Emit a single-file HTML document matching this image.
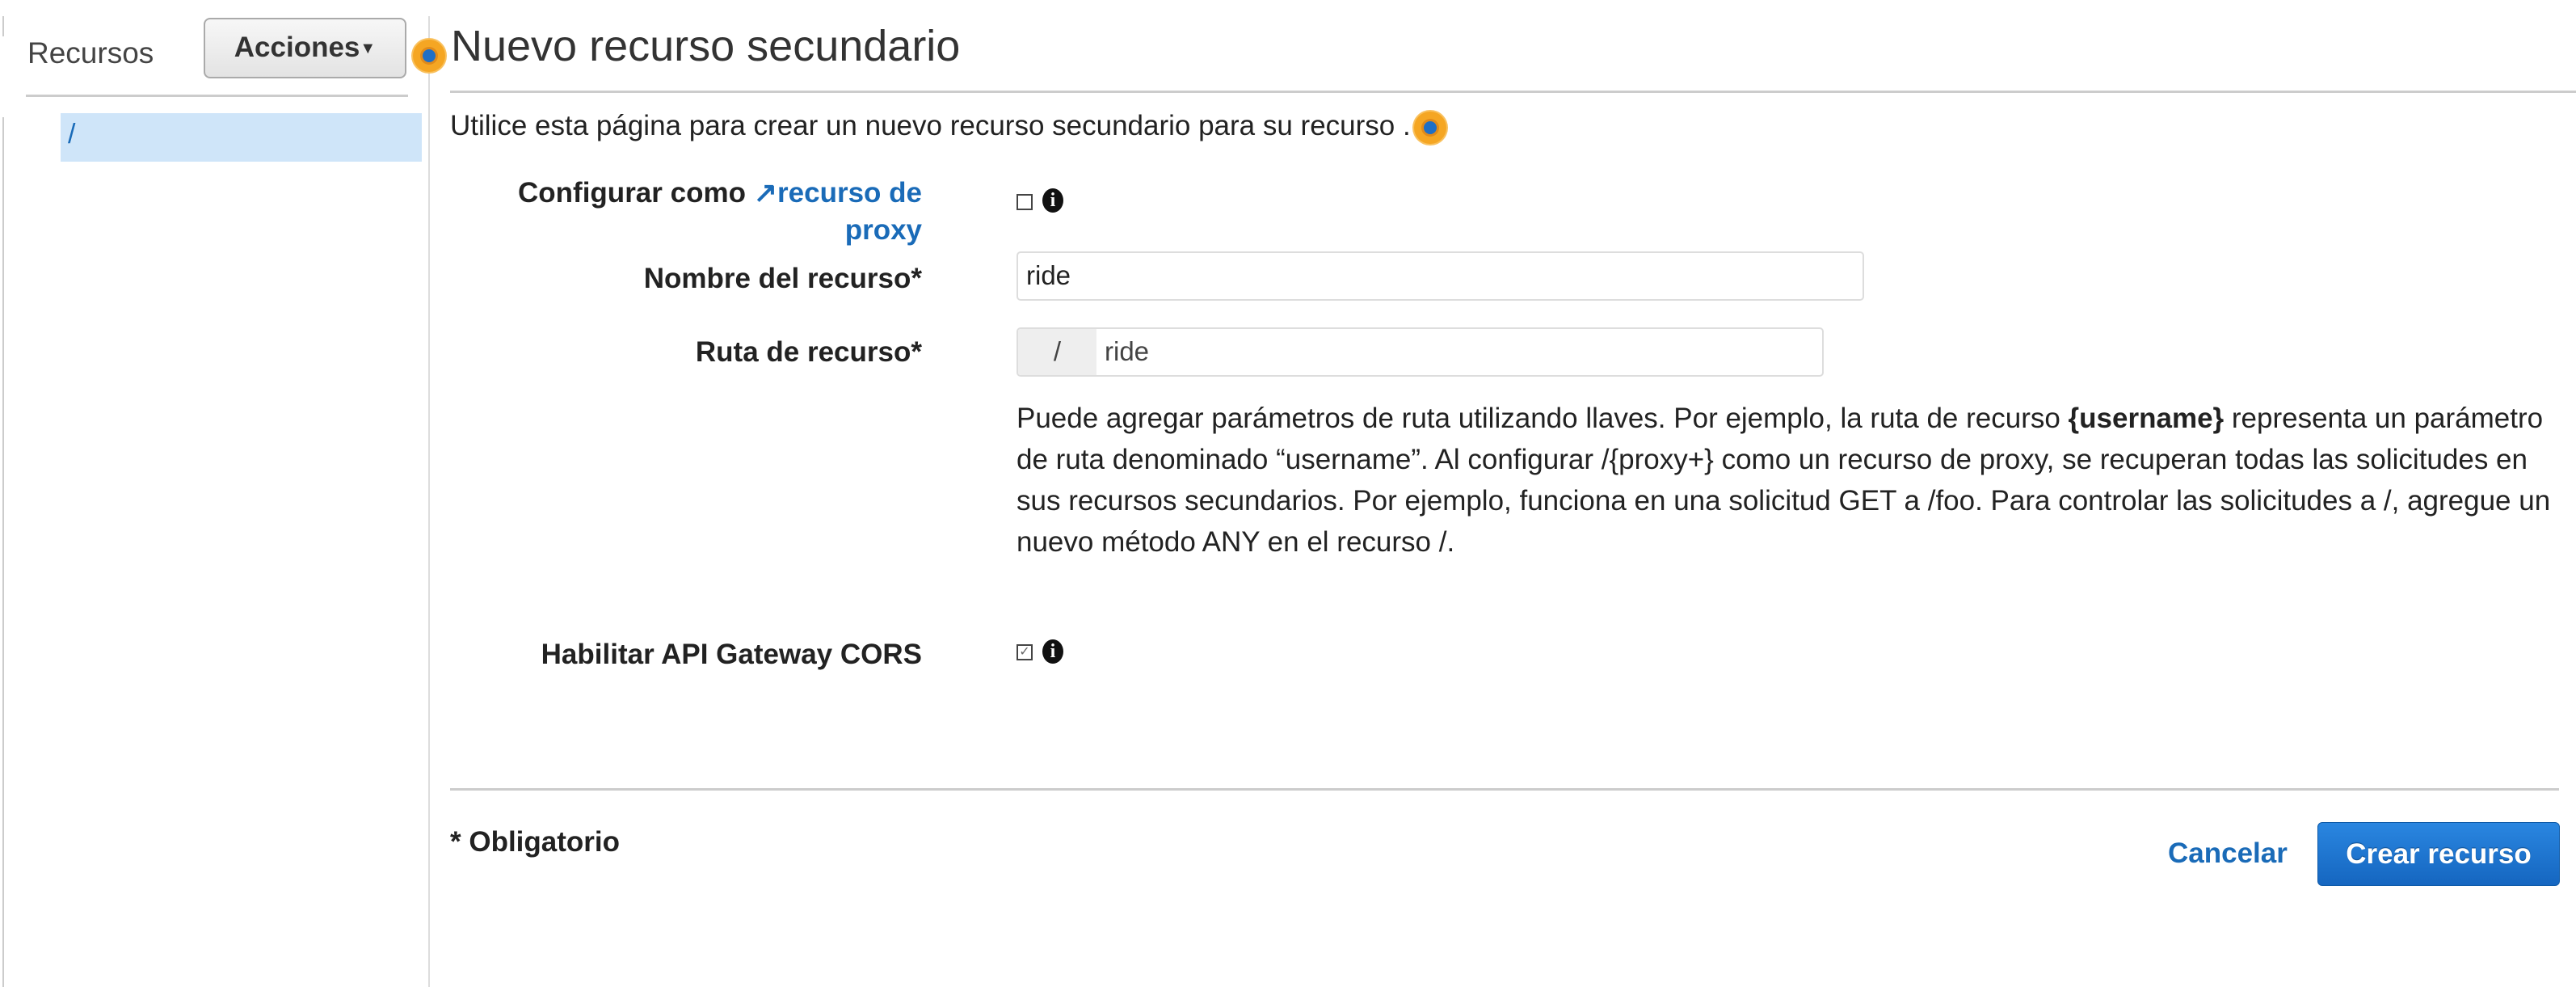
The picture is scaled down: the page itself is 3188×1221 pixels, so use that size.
<!DOCTYPE html>
<html><head><meta charset="utf-8"><style>
*{margin:0;padding:0;box-sizing:border-box}
body{width:3188px;height:1221px;background:#fff;position:relative;overflow:hidden;font-family:"Liberation Sans",Arial,sans-serif;color:#222}
.a{position:absolute;white-space:nowrap}
.lbl{position:absolute;right:2047px;font-weight:bold;font-size:35px;text-align:right;color:#222}
.dot{position:absolute;width:40px;height:40px;border-radius:50%;background:#f5a623;box-shadow:0 0 0 2px #f9c15e}
.dot:after{content:"";position:absolute;left:12px;top:12px;width:16px;height:16px;border-radius:50%;background:#1f6fc6;box-shadow:0 0 0 3px #e08a1a}
.cb{position:absolute;width:20px;height:20px;border:2px solid #444;background:#fff}
.info{position:absolute;width:26px;height:30px;border-radius:50%;background:#111;color:#fff;font-weight:bold;font-family:"Liberation Serif",serif;font-size:24px;text-align:center;line-height:30px}
</style></head><body>
<div class="a" style="left:3px;top:20px;width:2px;height:25px;background:#ccc"></div>
<div class="a" style="left:3px;top:145px;width:2px;height:1076px;background:#ccc"></div>
<div class="a" style="left:530px;top:20px;width:2px;height:1201px;background:#ddd"></div>
<div class="a" style="left:34px;top:45px;font-size:37px;color:#444">Recursos</div>
<div class="a" style="left:252px;top:22px;width:251px;height:75px;border:2px solid #aaa;border-radius:8px;background:linear-gradient(#f7f7f7,#e3e3e3);font-weight:bold;font-size:35px;color:#333;text-align:center;line-height:70px">Acciones<span style="font-size:20px;vertical-align:4px">▼</span></div>
<div class="dot" style="left:511px;top:49px"></div>
<div class="a" style="left:32px;top:117px;width:473px;height:3px;background:#ccc"></div>
<div class="a" style="left:75px;top:140px;width:447px;height:60px;background:#cfe5f9"></div>
<div class="a" style="left:84px;top:147px;font-size:34px;color:#1a6bb8">/</div>
<div class="a" style="left:558px;top:26px;font-size:54px;color:#333">Nuevo recurso secundario</div>
<div class="a" style="left:557px;top:112px;width:2631px;height:3px;background:#ccc"></div>
<div class="a" style="left:557px;top:136px;font-size:35px;color:#222">Utilice esta página para crear un nuevo recurso secundario para su recurso .</div>
<div class="dot" style="left:1750px;top:138px"></div>
<div class="lbl" style="top:216px;line-height:46px">Configurar como <span style="color:#1a6bb8">&#x2197;&#xFE0E;recurso de<br>proxy</span></div>
<div class="cb" style="left:1258px;top:240px"></div>
<div class="info" style="left:1290px;top:233px">i</div>
<div class="lbl" style="top:325px">Nombre del recurso*</div>
<div class="a" style="left:1258px;top:311px;width:1049px;height:61px;border:2px solid #ddd;border-radius:5px;font-size:33px;padding-left:10px;line-height:56px">ride</div>
<div class="lbl" style="top:416px">Ruta de recurso*</div>
<div class="a" style="left:1258px;top:405px;width:999px;height:61px;border:2px solid #ddd;border-radius:5px;font-size:33px;overflow:hidden">
<div style="position:absolute;left:0;top:0;width:97px;height:100%;background:#eee;color:#444;text-align:center;line-height:56px">/</div>
<div style="position:absolute;left:107px;top:0;line-height:56px;color:#444">ride</div></div>
<div class="a" style="left:1258px;top:492px;width:1910px;white-space:normal;font-size:35px;line-height:51px;color:#222">Puede agregar parámetros de ruta utilizando llaves. Por ejemplo, la ruta de recurso <b>{username}</b> representa un parámetro de ruta denominado “username”. Al configurar /{proxy+} como un recurso de proxy, se recuperan todas las solicitudes en sus recursos secundarios. Por ejemplo, funciona en una solicitud GET a /foo. Para controlar las solicitudes a /, agregue un nuevo método ANY en el recurso /.</div>
<div class="lbl" style="top:790px">Habilitar API Gateway CORS</div>
<div class="cb" style="left:1258px;top:797px;font-size:16px;line-height:16px;text-align:center;color:#666">✓</div>
<div class="info" style="left:1290px;top:791px">i</div>
<div class="a" style="left:557px;top:975px;width:2610px;height:3px;background:#ccc"></div>
<div class="a" style="left:557px;top:1022px;font-size:35px;font-weight:bold;color:#222">* Obligatorio</div>
<div class="a" style="left:2683px;top:1036px;font-size:35px;font-weight:bold;color:#1a6bb8">Cancelar</div>
<div class="a" style="left:2868px;top:1017px;width:300px;height:79px;border-radius:6px;background:linear-gradient(#2a86e0,#1566c0);border:1px solid #0e5aa8;color:#fff;font-size:35px;font-weight:bold;text-align:center;line-height:77px;text-shadow:0 -1px 1px #0c4a8a">Crear recurso</div>
</body></html>
